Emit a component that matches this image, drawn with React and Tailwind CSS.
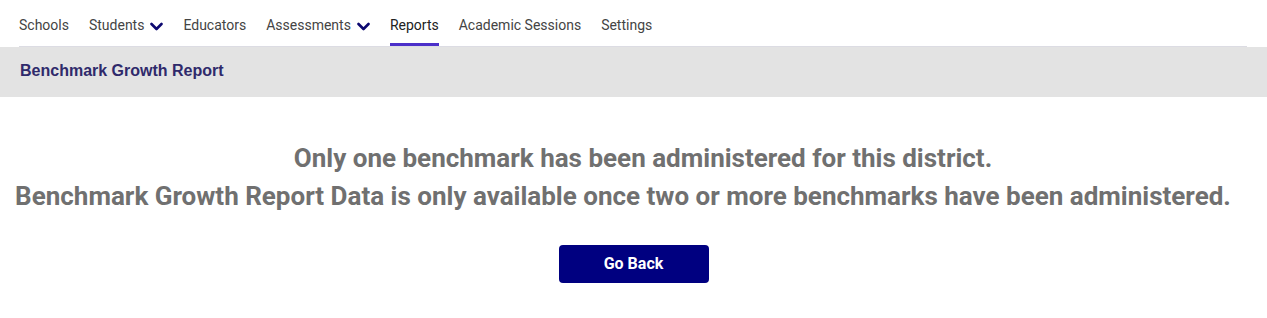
const navItems = [
    { label: "Schools" },
    { label: "Students", menu: true },
    { label: "Educators" },
    { label: "Assessments", menu: true },
    { label: "Reports", active: true },
    { label: "Academic Sessions" },
    { label: "Settings" },
];

function Chevron() {
    return (
        <svg width="13" height="9" viewBox="0 0 13 9" className="mt-[2px]">
            <path
                d="M1.5 2 L6.5 7 L11.5 2"
                fill="none"
                stroke="#0c0870"
                strokeWidth="2.6"
                strokeLinecap="round"
                strokeLinejoin="round"
            />
        </svg>
    );
}

export default function App() {
    return (
        <div className="w-full bg-white" style={{ fontFamily: "Roboto, sans-serif" }}>
            <nav className="ml-[19px] mr-[20px] flex gap-5 border-b border-[#dcdce3]">
                {navItems.map((item) => (
                    <div
                        key={item.label}
                        className={`flex items-center gap-[6px] pt-[15px] pb-[8px] border-b-[3px] text-[14px] leading-5 ${
                            item.active
                                ? "border-[#4b2fc9] text-[#222]"
                                : "border-transparent text-[#444]"
                        }`}
                    >
                        <span>{item.label}</span>
                        {item.menu && <Chevron />}
                    </div>
                ))}
            </nav>
            <div className="h-[50px] bg-[#e3e3e3] flex items-center px-5 pb-[3px]">
                <h1
                    className="text-[16px] font-bold text-[#2f2a6b]"
                    style={{ fontFamily: '"Liberation Sans", Arial, sans-serif' }}
                >
                    Benchmark Growth Report
                </h1>
            </div>
            <div className="flex flex-col items-center pt-[42px] text-[26px] font-bold leading-[38px] text-[#707070] text-center">
                <p className="pl-[19px]">
                    Only one benchmark has been administered for this district.
                </p>
                <p className="pr-[21px] whitespace-nowrap">
                    Benchmark Growth Report Data is only available once two or more benchmarks have been administered.
                </p>
                <button className="mt-[30px] w-[150px] h-[38px] rounded bg-[#000080] text-white text-[16px] leading-normal font-bold">
                    Go Back
                </button>
            </div>
        </div>
    );
}
